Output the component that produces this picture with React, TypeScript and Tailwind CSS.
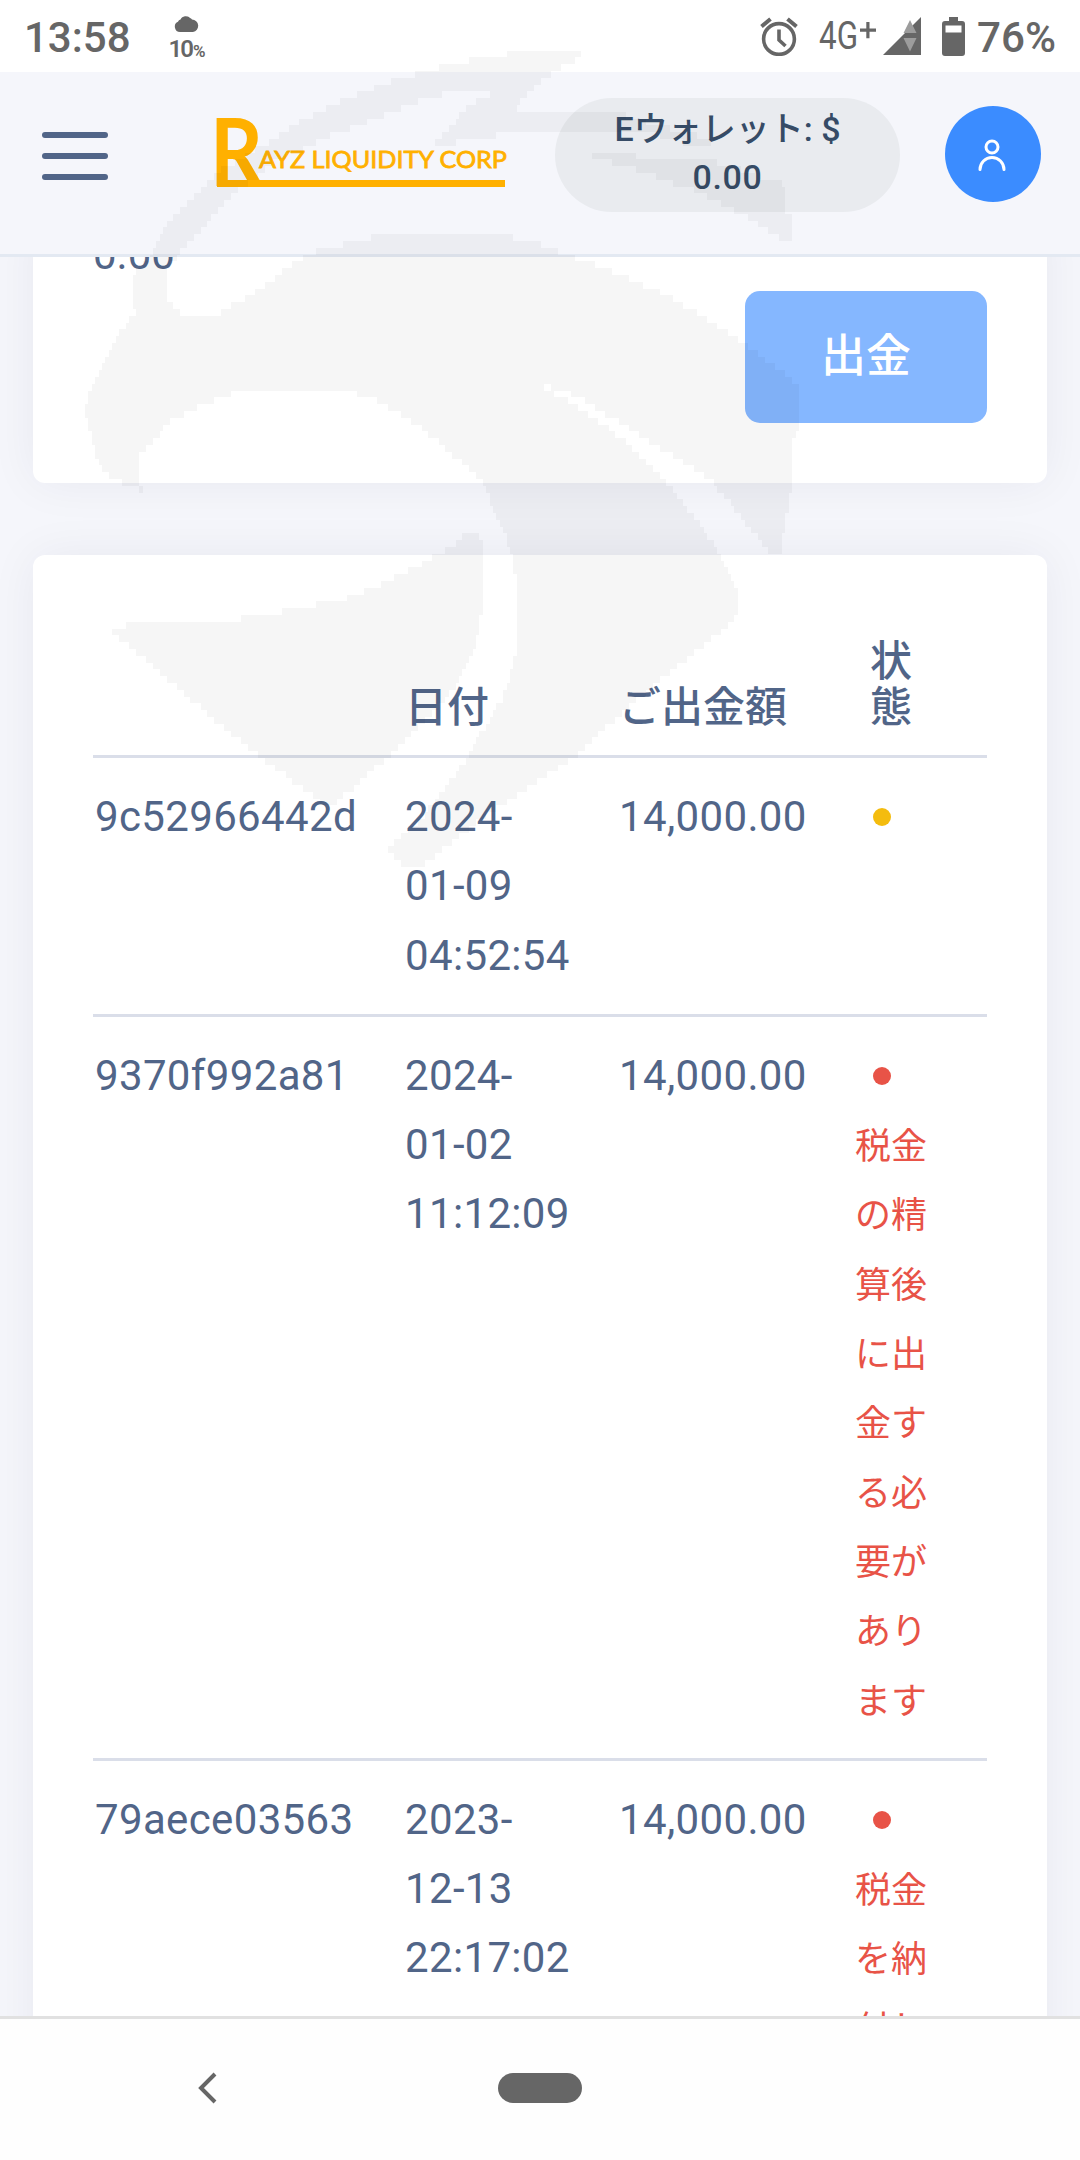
import React from 'react';

type Point = [number, number];

interface Withdrawal {
    id: string;
    date: string[];
    amount: string;
    status: 'pending' | 'rejected';
    note?: string;
}

const withdrawals: Withdrawal[] = [
    { id: '9c52966442d', date: ['2024-', '01-09', '04:52:54'], amount: '14,000.00', status: 'pending' },
    { id: '9370f992a81', date: ['2024-', '01-02', '11:12:09'], amount: '14,000.00', status: 'rejected', note: '税金の精算後に出金する必要があります' },
    { id: '79aece03563', date: ['2023-', '12-13', '22:17:02'], amount: '14,000.00', status: 'rejected', note: '税金を納付し' },
];

// Outlines of the eagle watermark
const EAGLE: Point[][] = [
    [
        [583, 51], [523, 51.5], [482, 58], [449, 64.5], [428, 71], [402, 78], [381, 85], [367, 91], [348, 98], [334, 105], [320, 111], [307, 118],
        [273, 139], [259, 147], [220, 171], [193, 198], [171, 219], [159, 241], [152, 254], [137, 270], [131, 278], [131, 302], [138, 310],
        [118, 335], [105, 361], [91, 388], [85, 410], [91, 439], [98, 463], [111, 477], [131, 488], [145, 490], [138, 482], [138, 455], [152, 442],
        [171, 420], [205, 404], [246, 388], [341, 388], [380, 402], [414, 423], [448, 450], [482, 482], [496, 514], [510, 549], [516, 576],
        [516, 656], [503, 699], [477, 739], [467, 760], [443, 790], [423, 817], [388, 849], [399, 860], [406, 868], [421, 868], [462, 833],
        [525, 790], [576, 755], [641, 696], [690, 656], [739, 616], [739, 592], [726, 568], [705, 530], [666, 482], [632, 447], [598, 420],
        [564, 399], [549, 391], [535, 382], [576, 396], [603, 412], [646, 439], [685, 463], [712, 482], [739, 514], [772, 556], [780, 556],
        [786, 522], [793, 479], [793, 436], [799, 434], [799, 388], [787, 375], [739, 340], [676, 300], [617, 273], [564, 254], [545, 246],
        [516, 238], [477, 233], [390, 233], [351, 242], [307, 254], [278, 276], [239, 302], [213, 316], [185, 316], [165, 300], [165, 281],
        [169, 268], [179, 254], [186, 244], [205, 225], [232, 195], [259, 177], [278, 158], [295, 153], [313, 145], [327, 137], [347, 130],
        [368, 122], [393, 112], [422, 100], [448, 93], [489, 90], [489, 97], [475, 102], [463, 112], [453, 125], [436, 140], [436, 145],
        [453, 144], [463, 138], [496, 137], [496, 131], [643, 131], [677, 140], [692, 145], [712, 145], [712, 140], [663, 127], [633, 118],
        [615, 111], [516, 111], [517, 103], [530, 92], [543, 80], [557, 70], [583, 55],
    ],
    [
        [590, 152], [618, 155], [690, 159], [732, 165], [760, 179], [779, 182], [786, 187], [786, 212], [793, 213], [793, 240], [780, 239],
        [760, 225], [738, 212], [712, 200], [698, 192], [658, 177], [638, 170], [612, 163], [590, 158],
    ],
    [
        [111, 632], [125, 625], [205, 623], [259, 616], [302, 608], [351, 597], [399, 576], [443, 552], [472, 530], [482, 538], [483, 608],
        [476, 645], [462, 677], [443, 702], [404, 742], [351, 790], [336, 803], [322, 803], [268, 763], [205, 712], [147, 661],
    ],
];

const CELL = 6.8;
const OFFSET_Y = 3;
const snap = (v: number) => Math.round((Math.round((v / CELL) * 2) / 2) * CELL);

// Fills an outline with rows of cells, which gives the stepped edge
const toSteps = (points: Point[]) => {
    let d = '';
    for (let y = OFFSET_Y; y < 880; y += CELL) {
        const mid = y + CELL / 2;
        const xs: number[] = [];
        points.forEach(([x1, y1], i) => {
            const [x2, y2] = points[(i + 1) % points.length];
            if (y1 <= mid !== y2 <= mid) {
                xs.push(x1 + ((mid - y1) / (y2 - y1)) * (x2 - x1));
            }
        });
        xs.sort((a, b) => a - b);
        for (let i = 0; i + 1 < xs.length; i += 2) {
            d += `M${snap(xs[i])} ${Math.round(y)}H${snap(xs[i + 1])}V${Math.round(y + CELL)}H${snap(xs[i])}Z`;
        }
    }
    return d;
};

const Watermark: React.FC = () => (
    <svg className="absolute left-0 top-0 z-20 pointer-events-none" width="1080" height="900" viewBox="0 0 1080 900">
        {EAGLE.map((points, i) => (
            <path key={i} d={toSteps(points)} fill="#000" fillOpacity="0.036" shapeRendering="crispEdges" />
        ))}
    </svg>
);

const StatusBar: React.FC = () => (
    <div className="h-[72px] shrink-0 bg-white flex items-center justify-between pl-[24px] pr-[23px] text-[#666]">
        <div className="flex items-center">
            <span className="w-[145px] pt-[3px] text-[42px] leading-none font-medium">13:58</span>
            <div className="flex flex-col items-center w-[34px] pt-[6px]">
                <svg width="25" height="17" viewBox="0 0 25 17" fill="currentColor">
                    <path d="M6 17a5.400 5.400 0 0 1-2-10.300 3.500 3.500 0 0 1 2.500-2.200A5.800 5.800 0 0 1 16 3a4.500 4.500 0 0 1 2 1.500A6.300 6.300 0 0 1 19 17z" />
                </svg>
                <span className="mt-[5px] flex items-baseline text-[24px] leading-[24px] font-semibold tracking-[-2px]">
                    10<span className="ml-[1px] text-[17px] font-semibold">%</span>
                </span>
            </div>
        </div>
        <div className="flex items-center">
            <svg width="38" height="39" viewBox="0 0 38 39" fill="none" stroke="currentColor" strokeWidth="3.6">
                <circle cx="19" cy="22" r="15.4" />
                <path d="M19 12.500v10.500l6.500 6" />
                <path d="M1.500 9.500l9-7.500M36.500 9.500l-9-7.500" strokeWidth="4" />
            </svg>
            <svg className="ml-[21px] overflow-visible" width="58" height="50" viewBox="0 0 58 50" fill="currentColor">
                <text x="0" y="38" fontSize="38" fontFamily="Roboto" textLength="39" lengthAdjust="spacingAndGlyphs">4G</text>
                <path d="M41 17.500h6.300V11h3.200v6.500H57v3.200h-6.500v6.600h-3.200v-6.600H41z" />
            </svg>
            <svg className="ml-[6px]" width="38" height="38" viewBox="0 0 38 38">
                <path d="M0 38L38 0v38z" fill="#666" />
                <path d="M27 3l6.500 13h-13zM27 34.500L20.500 21h13z" fill="#9c9c9c" />
            </svg>
            <svg className="ml-[21px]" width="23" height="39" viewBox="0 0 23 39">
                <path d="M7 0h9v4h4a3 3 0 0 1 3 3v29a3 3 0 0 1-3 3H3a3 3 0 0 1-3-3V7a3 3 0 0 1 3-3h4zM3.500 8.500v7h16v-7z" fill="#666" fillRule="evenodd" />
            </svg>
            <svg className="ml-[12px] overflow-visible" width="80" height="56" viewBox="0 0 80 56" fill="currentColor">
                <text x="0" y="44" fontSize="42" fontWeight="500" fontFamily="Roboto" textLength="79" lengthAdjust="spacingAndGlyphs">76%</text>
            </svg>
        </div>
    </div>
);

const Logo: React.FC = () => (
    <svg className="ml-[99px] -mt-[38px] overflow-visible" width="302" height="110" viewBox="-10 -30 302 110" fill="#ffb000" fontFamily="Lato">
        <text x="-7" y="67" fontSize="93" fontWeight="700" textLength="53" lengthAdjust="spacingAndGlyphs">R</text>
        <text x="42" y="49" fontSize="24" fontWeight="400" stroke="#ffb000" strokeWidth="0.8" textLength="248" lengthAdjust="spacingAndGlyphs">AYZ LIQUIDITY CORP</text>
        <rect x="0" y="61" width="288" height="7" />
    </svg>
);

const Header: React.FC = () => (
    <header className="relative z-10 h-[185px] shrink-0 flex items-center bg-[#f5f6fb] border-b-[3px] border-[#e3e9f2] pl-[42px]">
        <button className="flex flex-col gap-[15px] w-[66px] -mt-[14px]">
            <span className="h-[6px] w-full rounded-full bg-[#516588]" />
            <span className="h-[6px] w-full rounded-full bg-[#516588]" />
            <span className="h-[6px] w-full rounded-full bg-[#516588]" />
        </button>
        <Logo />
        <div className="ml-[46px] -mt-[16px] w-[345px] h-[114px] shrink-0 rounded-full bg-[#e9ebef] flex flex-col items-center pt-[7px] text-[34px] leading-[48px] font-medium text-[#364b66]">
            <span>Eウォレット: $</span>
            <span className="tracking-[0.7px]">0.00</span>
        </div>
        <div className="ml-[45px] -mt-[18px] size-[96px] shrink-0 rounded-full bg-[#3b8cff] flex items-center justify-center">
            <svg className="-ml-[3px] mt-[1px]" width="30" height="34" viewBox="0 0 30 34" fill="none" stroke="#fff" strokeWidth="3" strokeLinecap="round">
                <circle cx="15" cy="9" r="6" />
                <path d="M3 31.500a12 12 0 0 1 24 0" />
            </svg>
        </div>
    </header>
);

const StatusCell: React.FC<{ item: Withdrawal }> = ({ item }) => (
    <div className={`w-[72px] mx-auto text-[36px] leading-[69.3px] ${item.status === 'pending' ? 'text-[#f4bc0e]' : 'text-[#e85347]'}`}>
        <div className="h-[69.3px] flex items-center pl-[18px]">
            <span className="size-[18px] rounded-full bg-current" />
        </div>
        {item.note && <p className="relative top-[3px] break-all">{item.note}</p>}
    </div>
);

const WithdrawalTable: React.FC = () => (
    <table className="w-full table-fixed border-collapse text-[42px] text-[#516588]">
        <colgroup>
            <col className="w-[310px]" />
            <col className="w-[215px]" />
            <col className="w-[229px]" />
            <col className="w-[88px]" />
            <col />
        </colgroup>
        <thead>
            <tr className="align-bottom text-left leading-[46px]">
                <th />
                <th className="p-0 pl-[2px] pb-[24px] font-medium">日付</th>
                <th className="p-0 pl-[1px] pb-[24px] font-medium whitespace-nowrap">ご出金額</th>
                <th className="p-0 px-[23px] pb-[24px] font-medium">状態</th>
                <th />
            </tr>
        </thead>
        <tbody>
            {withdrawals.map(item => (
                <tr key={item.id} className="align-top leading-[69.3px] tracking-[0.35px] border-t-[3px] border-[#dadee9]">
                    <td className="py-[24px] pl-[2px]">{item.id}</td>
                    <td className="py-[24px] pl-[2px]">
                        {item.date.map(line => <div key={line}>{line}</div>)}
                    </td>
                    <td className="py-[24px] pl-[1px]">{item.amount}</td>
                    <td className="py-[24px] tracking-normal"><StatusCell item={item} /></td>
                    <td />
                </tr>
            ))}
        </tbody>
    </table>
);

const App: React.FC = () => {
    return (
        <div className="relative w-[1080px] h-[2160px] overflow-hidden flex flex-col bg-[#f5f6fb] font-['Roboto','Noto_Sans_CJK_JP',sans-serif]" lang="ja">
            <StatusBar />
            <Header />
            <main className="h-[1759px] shrink-0 overflow-hidden px-[33px]">
                <section className="-mt-[37px] h-[263px] rounded-[12px] bg-white px-[60px] flex justify-between items-start shadow-[0_0_48px_rgba(18,38,63,0.06)]">
                    <span className="text-[42px] leading-[69px] text-[#516588]">0.00</span>
                    <button className="mt-[71px] w-[242px] h-[132px] rounded-[15px] bg-[#85b7ff] text-white text-[45px] font-medium">出金</button>
                </section>
                <section className="mt-[72px] h-[1800px] rounded-[12px] bg-white px-[60px] pt-[84px] shadow-[0_0_48px_rgba(18,38,63,0.06)]">
                    <WithdrawalTable />
                </section>
            </main>
            <nav className="h-[144px] shrink-0 bg-[#fefefe] border-t-[3px] border-[#e1e1e1] flex items-center pl-[198px] pb-[3px]">
                <svg width="20" height="32" viewBox="0 0 20 32" fill="none" stroke="#666" strokeWidth="4">
                    <path d="M17 2L3 16l14 14" />
                </svg>
                <span className="ml-[280px] w-[84px] h-[30px] rounded-full bg-[#666]" />
            </nav>
            <Watermark />
        </div>
    );
};

export default App;
